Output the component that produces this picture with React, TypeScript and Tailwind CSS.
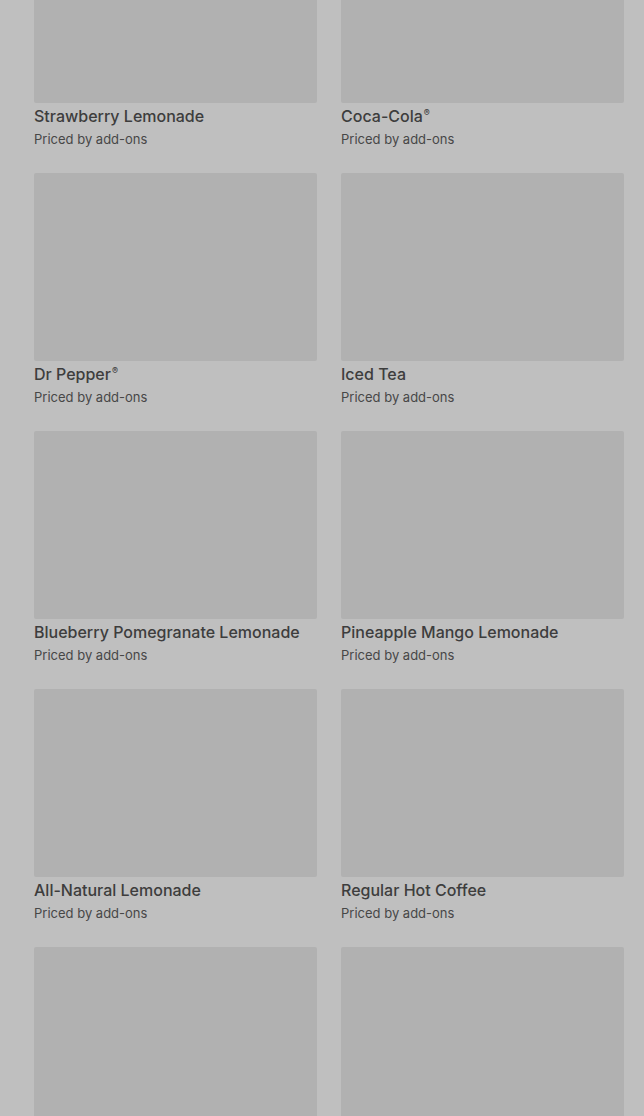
const items = [
  { name: "Strawberry Lemonade" },
  { name: "Coca-Cola", reg: true },
  { name: "Dr Pepper", reg: true },
  { name: "Iced Tea" },
  { name: "Blueberry Pomegranate Lemonade" },
  { name: "Pineapple Mango Lemonade" },
  { name: "All-Natural Lemonade" },
  { name: "Regular Hot Coffee" },
]

export default function App() {
  return (
    <div className="h-[1116px] w-[644px] overflow-hidden bg-[#bfbfbf] font-['Inter',sans-serif]">
      <div className="-mt-[85px] grid grid-cols-2 gap-x-6 gap-y-6 pl-[34px] pr-5">
        {items.map((item) => (
          <div key={item.name} className="flex flex-col">
            <div className="h-[188px] w-full rounded-[2px] bg-[#b1b1b1]" />
            <div className="mt-[2px] text-[16px] leading-[22px] font-medium text-[#3d3d3d]">
              {item.name}
              {item.reg && <sup className="ml-px text-[9px] top-[-0.7em]">®</sup>}
            </div>
            <div className="mt-[2px] text-[13px] leading-[20px] text-[#474747]">Priced by add-ons</div>
          </div>
        ))}
        {/* next row, only the pictures are in view */}
        <div className="h-[188px] w-full rounded-[2px] bg-[#b1b1b1]" />
        <div className="h-[188px] w-full rounded-[2px] bg-[#b1b1b1]" />
      </div>
    </div>
  )
}
